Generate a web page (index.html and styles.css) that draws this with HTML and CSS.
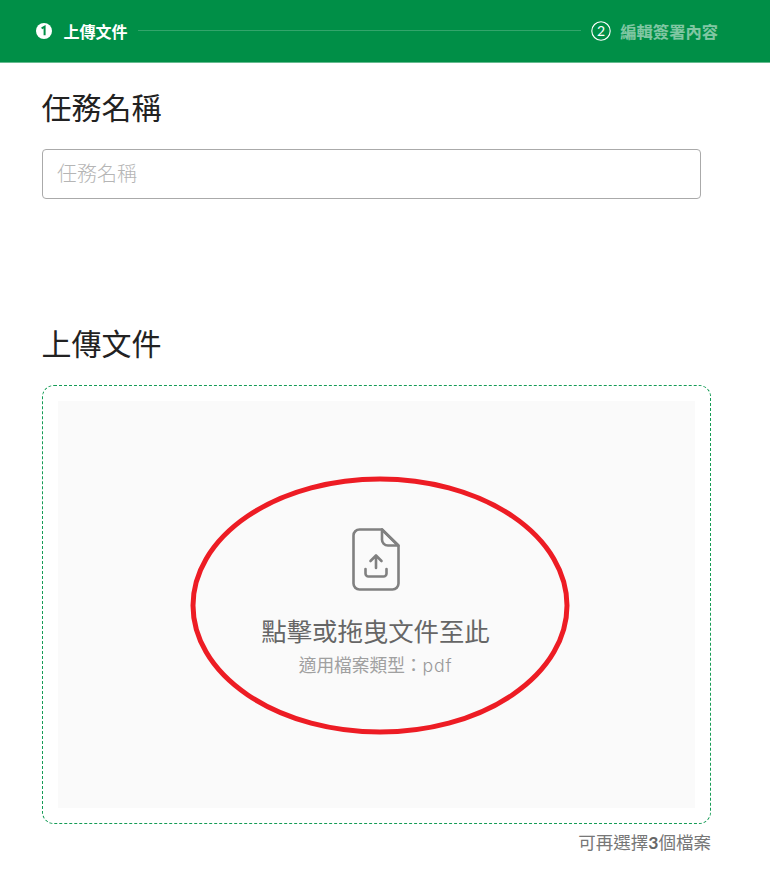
FILE: index.html
```html
<!DOCTYPE html>
<html lang="zh-Hant">
<head>
  <meta charset="UTF-8"/>
  <meta name="viewport" content="width=device-width, initial-scale=1.0"/>
  <title>上傳文件</title>
  <link rel="stylesheet" href="styles.css">
</head>
<body>

  <header class="steps">
    <div class="step step-active">
      <span class="step-num">
        <svg width="16" height="16" viewBox="0 0 16 16"><circle cx="8" cy="8" r="8" fill="#fff"/><path d="M5.600 5.300 8.600 3.700V12.300" fill="none" stroke="#008f47" stroke-width="2"/></svg>
      </span>
      <span class="step-label">上傳文件</span>
    </div>
    <div class="step-line"></div>
    <div class="step step-next">
      <span class="step-num">
        <svg width="20" height="20" viewBox="0 0 20 20"><circle cx="10" cy="10" r="9.200" fill="none" stroke="#fff" stroke-width="1.100"/><text x="10" y="15" text-anchor="middle" class="step-digit">2</text></svg>
      </span>
      <span class="step-label">編輯簽署內容</span>
    </div>
  </header>

  <main class="content">
    <h2 class="title">任務名稱</h2>
    <input class="name-input" type="text" placeholder="任務名稱">

    <h2 class="title title-upload">上傳文件</h2>
    <div class="dropzone">
      <div class="dropzone-inner">
        <svg class="file-icon" width="48" height="63" viewBox="0 0 48 63" fill="none" stroke="#808080" stroke-width="2.600" stroke-linejoin="round" stroke-linecap="round">
          <path d="M30 1.500H7.500a6 6 0 0 0-6 6v48a6 6 0 0 0 6 6h33a6 6 0 0 0 6-6V18z"/>
          <path d="M30 1.500V11a6 6 0 0 0 6 6.500h10.500z"/>
          <path d="M24 40V28M18.500 33 24 27.500 29.500 33"/>
          <path d="M13.500 41v4.500a3 3 0 0 0 3 3h15a3 3 0 0 0 3-3V41"/>
        </svg>
        <p class="drop-main">點擊或拖曳文件至此</p>
        <p class="drop-sub">適用檔案類型：<span class="ext">pdf</span></p>
      </div>
      <svg class="mark" width="382" height="261" viewBox="0 0 382 261"><ellipse cx="191" cy="130.500" rx="187" ry="126.500" fill="none" stroke="#ed1c24" stroke-width="5"/></svg>
    </div>
    <p class="remain">可再選擇<b class="count">3</b>個檔案</p>
  </main>

</body>
</html>
```

FILE: styles.css
```css
html, body {
  margin: 0;
  padding: 0;
  background-color: #fff;
  font-family: "Lato", "Noto Sans CJK TC", sans-serif;
}

.steps {
  display: flex;
  align-items: center;
  box-sizing: border-box;
  height: 63px;
  padding: 0 52px 1px 36px;
  border-bottom: 1px solid #66bb90;
  background-color: #008f47;
  color: #fff;
  font-size: 16px;
}

.step {
  display: flex;
  align-items: center;
}

.step-num {
  display: flex;
}

.step-active .step-label {
  margin-left: 11.500px;
  font-weight: 700;
}

.step-next .step-label {
  margin-left: 9.500px;
  font-size: 16.300px;
  font-weight: 700;
  opacity: 0.5;
}

.step-digit {
  fill: #fff;
  font-size: 14px;
}

.step-line {
  flex: 1;
  height: 1px;
  margin: 0 10px;
  background-color: rgba(255, 255, 255, 0.2);
}

.content {
  padding: 0 59px 0 42px;
}

.title {
  margin: 0 0 0 -0.500px;
  padding-top: 22px;
  font-size: 30px;
  font-weight: 400;
  line-height: 44px;
  color: #222;
}

.name-input {
  display: block;
  box-sizing: border-box;
  width: 659px;
  height: 50px;
  margin-top: 20px;
  padding: 0 14px 3px;
  border: 1px solid #aaa;
  border-radius: 4px;
  font-family: inherit;
  font-size: 20px;
  font-weight: 300;
}

.name-input::placeholder {
  color: #b5b5b5;
}

.title-upload {
  padding-top: 0;
  margin-top: 122px;
}

.dropzone {
  position: relative;
  box-sizing: border-box;
  height: 439px;
  margin-top: 20px;
  padding: 15px;
  border: 1px dashed #149c56;
  border-radius: 12px;
}

.dropzone-inner {
  display: flex;
  flex-direction: column;
  align-items: center;
  box-sizing: border-box;
  height: 407px;
  padding: 127px 2px 0 0;
  background-color: #fafafa;
}

.file-icon {
  display: block;
}

.drop-main {
  margin: 22px 0 0;
  font-size: 25.400px;
  line-height: 36px;
  color: #666;
}

.drop-sub {
  margin: 3px 0 0;
  font-size: 17.700px;
  line-height: 28px;
  color: #a0a0a0;
}

.ext {
  font-family: "Inter", sans-serif;
  font-weight: 300;
  letter-spacing: 0.800px;
  color: #999;
}

.mark {
  position: absolute;
  left: 146px;
  top: 89px;
}

.remain {
  margin: 6px 0 0;
  font-size: 17.500px;
  line-height: 26px;
  text-align: right;
  color: #777;
}

.count {
  font-weight: 700;
  color: #666;
}
```
